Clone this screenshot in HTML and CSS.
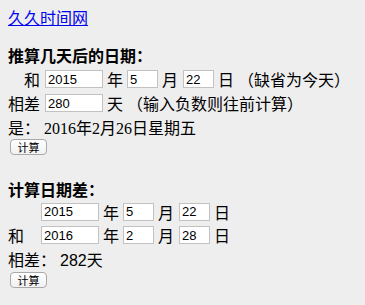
FILE: index.html
```html
<!DOCTYPE html>
<html lang="zh-CN">
<head>
<meta charset="utf-8">
<title>久久时间网</title>
<link rel="stylesheet" href="styles.css">
</head>
<body>
<div class="page">
  <a class="logo" href="#">久久时间网</a>

  <section class="calc calc-add">
    <div class="title">推算几天后的日期：</div>
    <div class="row">
      <span class="lead lead-indent">和</span>
      <input class="inp yr" value="2015">
      <span class="unit">年</span>
      <input class="inp md" value="5">
      <span class="unit">月</span>
      <input class="inp md day" value="22">
      <span class="unit">日</span>
      <span class="note">（缺省为今天）</span>
    </div>
    <div class="row">
      <span class="lead">相差</span>
      <input class="inp yr" value="280">
      <span class="unit">天</span>
      <span class="note">（输入负数则往前计算）</span>
    </div>
    <div class="row text-row">是：<span class="val">2016年2月26日星期五</span></div>
    <button class="btn" type="button">计算</button>
  </section>

  <section class="calc calc-diff">
    <div class="title title-2">计算日期差：</div>
    <div class="row row-a">
      <span class="lead2"></span>
      <input class="inp yr" value="2015">
      <span class="unit">年</span>
      <input class="inp md" value="5">
      <span class="unit">月</span>
      <input class="inp md day" value="22">
      <span class="unit">日</span>
    </div>
    <div class="row row-b">
      <span class="lead2">和</span>
      <input class="inp yr" value="2016">
      <span class="unit">年</span>
      <input class="inp md" value="2">
      <span class="unit">月</span>
      <input class="inp md day" value="28">
      <span class="unit">日</span>
    </div>
    <div class="row text-row row-c">相差：<span class="val sans">282天</span></div>
    <button class="btn btn-2" type="button">计算</button>
  </section>
</div>
</body>
</html>
```

FILE: styles.css
```css
html, body {
  margin: 0;
  padding: 0;
  background: #eeeeee;
}

body {
  font-family: "Liberation Serif", "Noto Sans CJK SC", serif;
  font-size: 16px;
  color: #000;
}

.page {
  padding: 8px;
  display: flex;
  flex-direction: column;
  align-items: flex-start;
}

.logo {
  display: block;
  line-height: 18px;
  color: #0000ee;
  text-decoration: underline;
  font-family: "Noto Sans CJK SC", sans-serif;
}

.calc {
  display: flex;
  flex-direction: column;
  align-items: flex-start;
}

.calc-add {
  margin-top: 18px;
}

.calc-diff {
  margin-top: 23px;
}

.title {
  height: 23px;
  line-height: 23px;
  font-weight: bold;
  font-family: "Noto Sans CJK SC", sans-serif;
}

.title-2 {
  height: 22px;
  line-height: 22px;
}

.row {
  display: flex;
  align-items: center;
  column-gap: 4px;
  height: 24px;
  white-space: nowrap;
  font-family: "Noto Sans CJK SC", sans-serif;
}

.row-a {
  height: 23px;
}

.row-c {
  height: 23px;
}

.lead {
  width: 33px;
  text-align: left;
}

.lead-indent {
  padding-left: 16px;
  box-sizing: border-box;
}

.lead2 {
  width: 29px;
}

.unit {
  width: 16px;
}

.note {
  margin-left: 0;
}

.text-row {
  column-gap: 0;
}

.val {
  margin-left: 4px;
  font-family: "Liberation Serif", "Noto Sans CJK SC", serif;
}

.val.sans {
  font-family: "Liberation Sans", "Noto Sans CJK SC", sans-serif;
}

.inp {
  box-sizing: border-box;
  height: 18px;
  margin: 0;
  padding: 0 2px;
  border: 1px solid #c2c2c2;
  background: #ffffff;
  font-family: "Liberation Sans", sans-serif;
  font-size: 13px;
  color: #000;
  outline: none;
}

.yr {
  width: 58px;
}

.md {
  width: 31px;
}

.day {
  margin-left: 1px;
}

.btn {
  box-sizing: border-box;
  width: 37px;
  height: 16px;
  margin: 0 0 0 2px;
  padding: 0;
  border: 1px solid #a9a9a9;
  border-radius: 4px;
  background: linear-gradient(#ffffff, #f1f1f1);
  font-family: "Noto Sans CJK SC", sans-serif;
  font-size: 11px;
  line-height: 14px;
  color: #000;
}

.btn-2 {
  margin-top: 2px;
}
```
